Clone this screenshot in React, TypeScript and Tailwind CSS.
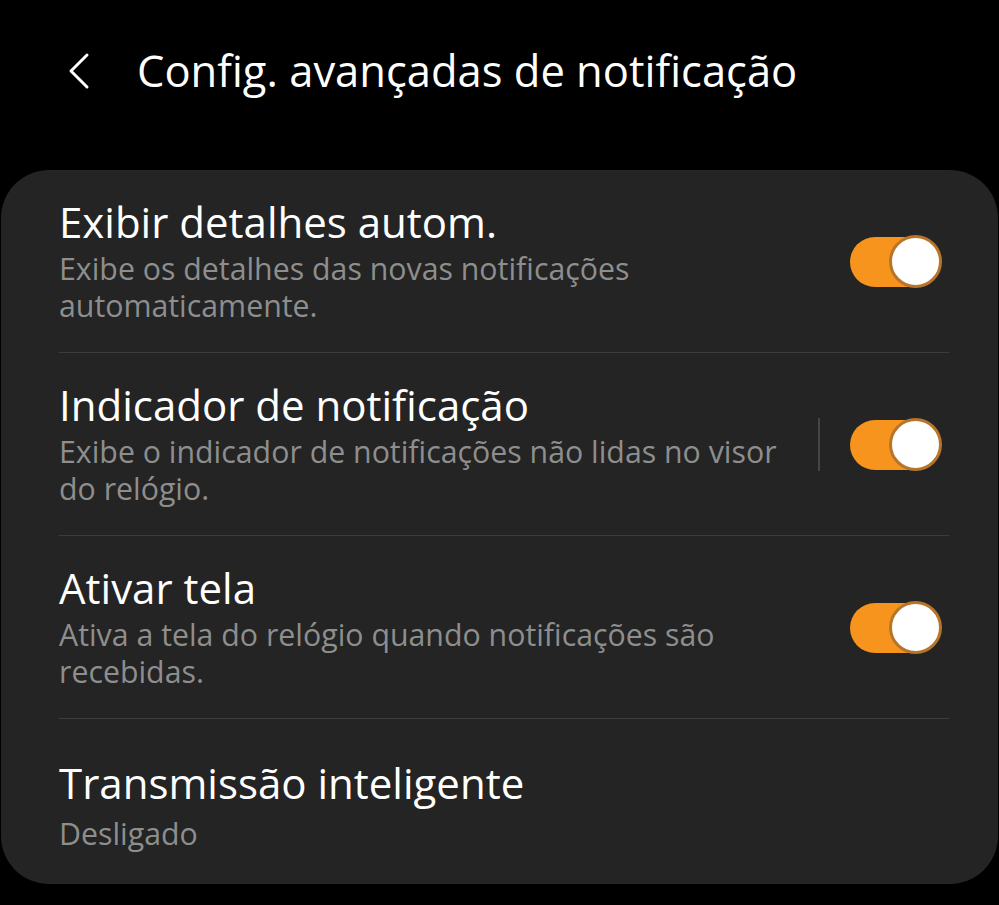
import React from "react";

const font = { fontFamily: '"Open Sans", "Noto Sans", sans-serif' };

function Toggle() {
  return (
    <div className="relative h-[53px] w-[92px] shrink-0">
      <div className="absolute left-0 top-[2px] h-[50px] w-[88px] rounded-full bg-[#f7941d]" />
      <div className="absolute right-0 top-0 h-[53px] w-[53px] rounded-full border-[3px] border-[#b8752a] bg-white" />
    </div>
  );
}

function Row({
  title,
  sub,
  toggle,
  sep,
  last,
}: {
  title: string;
  sub: React.ReactNode;
  toggle?: boolean;
  sep?: boolean;
  last?: boolean;
}) {
  return (
    <div className={last ? "" : "border-b border-[#3b3c3b]"}>
      <div className={`flex items-center ${last ? "h-[165px]" : "h-[182px]"}`}>
        <div className={`flex-1 ${last ? "pt-[2px]" : "pb-[6px]"}`}>
          <div className="text-[42px] leading-[57px] text-white">{title}</div>
          <div className={`${last ? "mt-[4px]" : ""} text-[30.3px] leading-[37px] text-[#8e8e8e]`}>{sub}</div>
        </div>
        {sep && <div className="mr-[30px] h-[53px] w-[2px] bg-[#454545]" />}
        {toggle && (
          <div className="mr-[7px]">
            <Toggle />
          </div>
        )}
      </div>
    </div>
  );
}

export default function App() {
  return (
    <div className="h-[905px] w-[999px] overflow-hidden bg-black" style={font}>
      <div className="flex h-[170px] items-start pt-[42px]">
        <svg className="ml-[66px] mt-[10px]" width="26" height="38" viewBox="0 0 26 38">
          <path d="M21 3 L5 19 L21 35" stroke="white" strokeWidth="3" fill="none" strokeLinecap="round" strokeLinejoin="round" />
        </svg>
        <div className="ml-[45px] text-[43.5px] leading-[58px] text-white">Config. avançadas de notificação</div>
      </div>
      <div className="mx-[1px] rounded-[48px] bg-[#232423] pl-[58px] pr-[49px]">
        <Row
          title="Exibir detalhes autom."
          sub={<>Exibe os detalhes das novas notificações<br />automaticamente.</>}
          toggle
        />
        <Row
          title="Indicador de notificação"
          sub={<>Exibe o indicador de notificações não lidas no visor<br />do relógio.</>}
          toggle
          sep
        />
        <Row
          title="Ativar tela"
          sub={<>Ativa a tela do relógio quando notificações são<br />recebidas.</>}
          toggle
        />
        <Row title="Transmissão inteligente" sub="Desligado" last />
      </div>
    </div>
  );
}
